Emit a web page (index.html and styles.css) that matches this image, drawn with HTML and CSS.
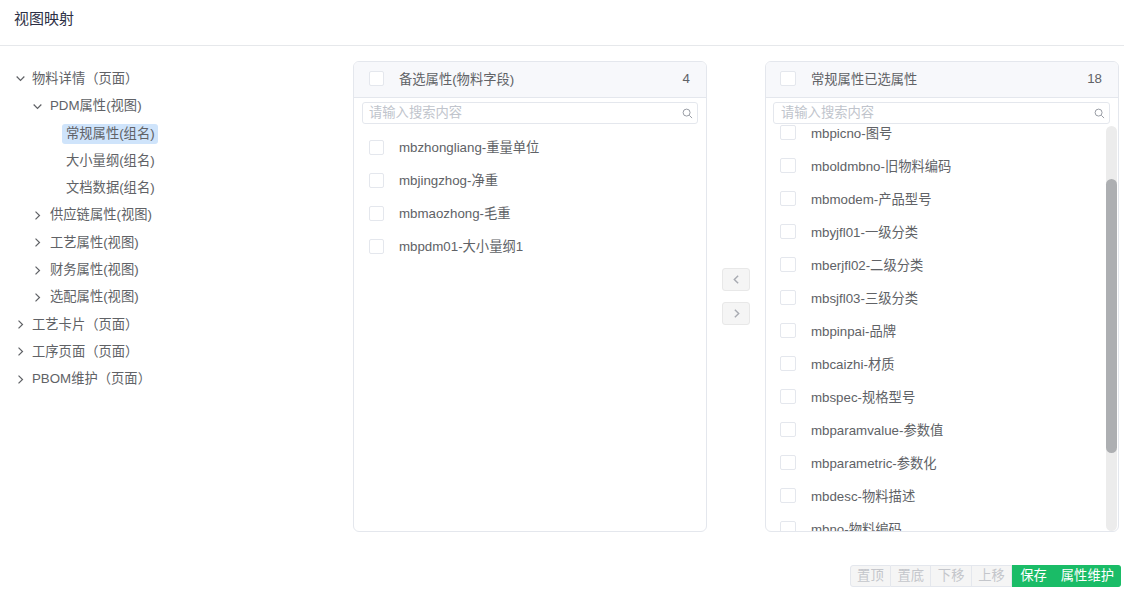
FILE: index.html
```html
<!DOCTYPE html>
<html lang="zh">
<head>
<meta charset="utf-8">
<title>视图映射</title>
<link rel="stylesheet" href="styles.css">
</head>
<body>
<header class="head">视图映射</header>
<main class="main">
  <nav class="tree">
    <div class="node"><svg class="arrow" viewBox="0 0 10 10"><path d="M1.5 3.2 5 6.8 8.5 3.2"/></svg><span class="label">物料详情（页面）</span></div>
    <div class="node l1"><svg class="arrow" viewBox="0 0 10 10"><path d="M1.5 3.2 5 6.8 8.5 3.2"/></svg><span class="label">PDM属性(视图)</span></div>
    <div class="node l2"><span class="label sel">常规属性(组名)</span></div>
    <div class="node l2"><span class="label">大小量纲(组名)</span></div>
    <div class="node l2"><span class="label">文档数据(组名)</span></div>
    <div class="node l1"><svg class="arrow" viewBox="0 0 10 10"><path d="M3.2 1.5 6.8 5 3.2 8.5"/></svg><span class="label">供应链属性(视图)</span></div>
    <div class="node l1"><svg class="arrow" viewBox="0 0 10 10"><path d="M3.2 1.5 6.8 5 3.2 8.5"/></svg><span class="label">工艺属性(视图)</span></div>
    <div class="node l1"><svg class="arrow" viewBox="0 0 10 10"><path d="M3.2 1.5 6.8 5 3.2 8.5"/></svg><span class="label">财务属性(视图)</span></div>
    <div class="node l1"><svg class="arrow" viewBox="0 0 10 10"><path d="M3.2 1.5 6.8 5 3.2 8.5"/></svg><span class="label">选配属性(视图)</span></div>
    <div class="node"><svg class="arrow" viewBox="0 0 10 10"><path d="M3.2 1.5 6.8 5 3.2 8.5"/></svg><span class="label">工艺卡片（页面）</span></div>
    <div class="node"><svg class="arrow" viewBox="0 0 10 10"><path d="M3.2 1.5 6.8 5 3.2 8.5"/></svg><span class="label">工序页面（页面）</span></div>
    <div class="node"><svg class="arrow" viewBox="0 0 10 10"><path d="M3.2 1.5 6.8 5 3.2 8.5"/></svg><span class="label">PBOM维护（页面）</span></div>
  </nav>
  <section class="panel">
    <div class="panel-head"><span class="box"></span><span class="title">备选属性(物料字段)</span><span class="count">4</span></div>
    <div class="search"><span class="ph">请输入搜索内容</span><svg class="mag" viewBox="0 0 12 12"><circle cx="5" cy="5" r="3.8"/><path d="M8 8l3 3"/></svg></div>
    <div class="list">
      <div class="item"><span class="box"></span><span>mbzhongliang-重量单位</span></div>
      <div class="item"><span class="box"></span><span>mbjingzhog-净重</span></div>
      <div class="item"><span class="box"></span><span>mbmaozhong-毛重</span></div>
      <div class="item"><span class="box"></span><span>mbpdm01-大小量纲1</span></div>
    </div>
  </section>
  <div class="movers">
    <button class="mv"><svg viewBox="0 0 10 10"><path d="M6.5 1.5 3 5l3.5 3.5"/></svg></button>
    <button class="mv"><svg viewBox="0 0 10 10"><path d="M3.5 1.5 7 5 3.5 8.5"/></svg></button>
  </div>
  <section class="panel chosen">
    <div class="panel-head"><span class="box"></span><span class="title">常规属性已选属性</span><span class="count">18</span></div>
    <div class="search"><span class="ph">请输入搜索内容</span><svg class="mag" viewBox="0 0 12 12"><circle cx="5" cy="5" r="3.8"/><path d="M8 8l3 3"/></svg></div>
    <div class="list scroll">
      <div class="rows">
        <div class="item"><span class="box"></span><span>mbpicno-图号</span></div>
        <div class="item"><span class="box"></span><span>mboldmbno-旧物料编码</span></div>
        <div class="item"><span class="box"></span><span>mbmodem-产品型号</span></div>
        <div class="item"><span class="box"></span><span>mbyjfl01-一级分类</span></div>
        <div class="item"><span class="box"></span><span>mberjfl02-二级分类</span></div>
        <div class="item"><span class="box"></span><span>mbsjfl03-三级分类</span></div>
        <div class="item"><span class="box"></span><span>mbpinpai-品牌</span></div>
        <div class="item"><span class="box"></span><span>mbcaizhi-材质</span></div>
        <div class="item"><span class="box"></span><span>mbspec-规格型号</span></div>
        <div class="item"><span class="box"></span><span>mbparamvalue-参数值</span></div>
        <div class="item"><span class="box"></span><span>mbparametric-参数化</span></div>
        <div class="item"><span class="box"></span><span>mbdesc-物料描述</span></div>
        <div class="item"><span class="box"></span><span>mbno-物料编码</span></div>
      </div>
      <div class="track"><div class="thumb"></div></div>
    </div>
  </section>
</main>
<footer class="foot">
  <div class="btns">
    <button class="b off">置顶</button><button class="b off">置底</button><button class="b off">下移</button><button class="b off">上移</button><button class="b on save">保存</button><button class="b on">属性维护</button>
  </div>
</footer>
</body>
</html>
```
FILE: styles.css
```css
* { box-sizing: border-box; }
html, body { margin: 0; height: 100%; }
body {
  width: 1124px; height: 592px; overflow: hidden; background: #fff;
  font-family: "Liberation Sans", "Noto Sans CJK SC", sans-serif;
  font-size: 13.3px; color: #606266;
}
.head {
  height: 46px; padding: 10px 14px 0; font-size: 15px; line-height: 18px;
  color: #2c2f45; border-bottom: 1px solid #e6e8eb;
}
.main { display: flex; height: 486px; padding: 15px 6px 0 0; }
.tree { width: 353px; padding-top: 4.3px; flex: none; }
.node { display: flex; align-items: center; height: 27.3px; padding-left: 15px; }
.node.l1 { padding-left: 32px; }
.node.l2 { padding-left: 62px; }
.arrow { width: 11px; height: 11px; margin-right: 6px; flex: none; }
.node.l1 .arrow { margin-right: 7px; }
.arrow path, .mv path { fill: none; stroke: #606266; stroke-width: 1.1; }
.label { padding: 0 4px 0 0; line-height: 20px; }
.l2 .label { padding: 0 3px 0 4px; border-radius: 3px; }
.label.sel { background: #cfe4fb; }
.panel {
  width: 354px; height: 471px; flex: none; border: 1px solid #e4e7ed; border-radius: 6px;
  display: flex; flex-direction: column; overflow: hidden;
}
.panel-head {
  height: 36px; flex: none; display: flex; align-items: center; padding: 0 15px;
  background: #f7f8fb; border-bottom: 1px solid #e4e7ed;
}
.box {
  width: 15px; height: 15px; flex: none; background: #fff;
  border: 1px solid #e4e7ed; border-radius: 2px; margin-right: 15px;
}
.chosen .panel-head, .chosen .item { padding-left: 14px; }
.chosen .box { width: 16px; }
.panel-head .box { margin-bottom: 2px; }
.title { flex: 1; margin-bottom: 3px; }
.count { color: #606266; margin-bottom: 3px; margin-right: 1px; }
.search {
  height: 22px; flex: none; margin: 4px 8px 0; border: 1px solid #e4e7ed; border-radius: 3px;
  display: flex; align-items: center; justify-content: space-between; padding: 0 4px 0 6px;
}
.chosen .search { margin-left: 7px; padding-left: 7px; }
.ph { color: #c0c4cc; margin-bottom: 3px; }
.mag { width: 11px; height: 11px; }
.mag circle, .mag path { fill: none; stroke: #8f949c; stroke-width: 1; }
.list { flex: 1; min-height: 0; padding-top: 6.7px; }
.item { height: 33px; display: flex; align-items: center; padding-left: 15px; flex: none; }
.item > span:last-child { margin-bottom: 1px; }
.scroll { padding: 2px 0 0; display: flex; overflow: hidden; }
.rows { flex: 1; min-width: 0; margin-top: -9.7px; }
.track {
  width: 11px; height: 405px; flex: none; margin-right: 1px;
  background: #ececec; border-radius: 6px; padding-top: 53px;
}
.thumb { height: 274px; background: #adafb2; border-radius: 6px; }
.movers { width: 58px; flex: none; display: flex; flex-direction: column; align-items: center; gap: 11px; padding-top: 207px; }
.mv {
  width: 28px; height: 23px; padding: 0; background: #f5f5f5; border: 1px solid #e8e8e8; border-radius: 3px;
  display: flex; align-items: center; justify-content: center;
}
.mv svg { width: 11px; height: 11px; }
.mv path { stroke: #a8abb2; stroke-width: 1.3; }
.foot { display: flex; justify-content: flex-end; padding: 33px 3px 0 0; }
.btns { display: flex; }
.b {
  height: 22px; padding: 0 6.4px; font: inherit; border: 1px solid #e4e7ed; border-left: 0; line-height: 16px;
}
.b.off { background: #f5f5f5; color: #c4c6cb; }
.b.off:first-child { border-left: 1px solid #e4e7ed; border-radius: 3px 0 0 3px; }
.b.on { background: #1abc67; color: #fff; border-color: #1abc67; padding: 0 6px; }
.b.on.save { padding: 0 7px 0 8px; }
.b.on:last-child { border-radius: 0 3px 3px 0; }
```
